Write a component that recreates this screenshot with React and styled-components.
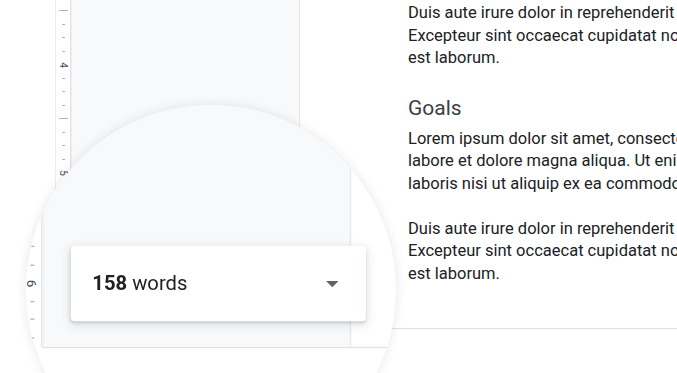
import React from "react";
import styled, { createGlobalStyle } from "styled-components";

const GlobalStyle = createGlobalStyle`
  html, body {
    margin: 0;
    padding: 0;
    width: 677px;
    height: 373px;
    overflow: hidden;
    background: #fff;
    font-family: Roboto, "Liberation Sans", Arial, sans-serif;
  }
`;

const Stage = styled.div`
  position: relative;
  width: 677px;
  height: 373px;
  overflow: hidden;
  background: #fff;
`;

const Doc = styled.div`
  position: relative;
  display: flex;
  width: 677px;
  height: 373px;
  padding-left: 55px;
  box-sizing: border-box;
  align-items: flex-start;
`;

const Ruler = styled.div`
  display: flex;
  flex-direction: column;
  width: 16px;
  height: 328px;
  padding-top: 3.75px;
  box-sizing: border-box;
  background: #fff;
  border-left: 1px solid #ededed;
  border-right: 1px solid #e3e3e3;
  overflow: hidden;
  flex-shrink: 0;
`;

const Mark = styled.div`
  height: 13.5px;
  flex-shrink: 0;
  display: flex;
  align-items: center;
  justify-content: center;
`;

const Tick = styled.span`
  display: block;
  width: ${(p) => (p.$long ? "9px" : "3px")};
  height: 1px;
  background: #b4b4b4;
`;

const RulerNum = styled.span`
  font-size: 10px;
  line-height: 1;
  color: #4a4a4a;
  transform: rotate(90deg);
`;

const Sheet = styled.div`
  flex: 1;
  display: flex;
  height: 329px;
  box-sizing: border-box;
  border-bottom: 1px solid #e2e2e2;
  min-width: 0;
`;

const SidePanel = styled.div`
  width: 227px;
  flex-shrink: 0;
  background: #f8f9fa;
  border-left: 1px solid #eef0f2;
  border-right: 1px solid #e6e8ea;
`;

const Page = styled.div`
  flex: 1;
  min-width: 0;
  overflow: hidden;
  padding: 2px 0 0 108px;
  white-space: nowrap;
  color: #202124;
`;

const Para = styled.p`
  margin: 0 0 22px;
  font-size: 16.5px;
  line-height: 22.6px;
`;

const Heading = styled.h2`
  margin: 24px 0 6px;
  font-size: 21px;
  line-height: 28px;
  font-weight: 400;
  color: #3c4043;
`;

const Counter = styled.div`
  position: absolute;
  left: 92px;
  top: 252.5px;
  width: 219px;
  height: 56px;
  box-sizing: border-box;
  display: flex;
  align-items: center;
  justify-content: space-between;
  padding: 0 14px 0 16px;
  background: #fff;
  border-radius: 3px;
  box-shadow: 0 1px 2px rgba(60, 64, 67, 0.18), 0 2px 6px 1px rgba(60, 64, 67, 0.12);
  font-size: 15px;
  color: #202124;
`;

const Count = styled.span`
  font-weight: 700;
`;

const Caret = styled.svg`
  width: 22px;
  height: 22px;
  fill: #5f6368;
`;

const Lens = styled.div`
  position: absolute;
  left: 26px;
  top: 105px;
  width: 370px;
  height: 370px;
  border-radius: 50%;
  overflow: hidden;
  background: #fff;
  box-shadow: 0 0 10px 2px rgba(0, 0, 0, 0.07);
`;

const Zoomed = styled.div`
  position: absolute;
  left: -26px;
  top: -105px;
  width: 677px;
  height: 373px;
  transform-origin: 153px 274px;
  transform: scale(1.348);
`;

const marks = Array.from({ length: 25 }, (_, n) =>
  n % 8 === 0 ? "long" : n % 8 === 4 ? "label" : "short"
);

const P1 = [
  "Duis aute irure dolor in reprehenderit in voluptate velit esse cillum dolore eu fugiat nulla pariatur.",
  "Excepteur sint occaecat cupidatat non proident, sunt in culpa qui officia deserunt mollit anim id",
  "est laborum.",
];

const P2 = [
  "Lorem ipsum dolor sit amet, consectetur adipiscing elit, sed do eiusmod tempor incididunt ut",
  "labore et dolore magna aliqua. Ut enim ad minim veniam, quis nostrud exercitation ullamco",
  "laboris nisi ut aliquip ex ea commodo consequat.",
];

const Lines = ({ lines }) => (
  <Para>
    {lines.map((l, i) => (
      <React.Fragment key={i}>
        {l}
        {i < lines.length - 1 && <br />}
      </React.Fragment>
    ))}
  </Para>
);

// zoomed copy only needs the left part of the page; the text column is off-lens
const DocView = ({ zoomed }) => (
  <Doc>
    <Ruler>
      {marks.map((kind, n) => (
        <Mark key={n}>
          {kind === "label" ? (
            <RulerNum>{4 + (n - 4) / 8}</RulerNum>
          ) : (
            <Tick $long={kind === "long"} />
          )}
        </Mark>
      ))}
    </Ruler>
    <Sheet>
      <SidePanel />
      <Page>
        {!zoomed && (
          <>
            <Lines lines={P1} />
            <Heading>Goals</Heading>
            <Lines lines={P2} />
            <Lines lines={P1} />
          </>
        )}
      </Page>
    </Sheet>
    {zoomed && (
      <Counter>
        <span>
          <Count>158</Count> words
        </span>
        <Caret viewBox="0 0 24 24">
          <path d="M7 10l5 5 5-5z" />
        </Caret>
      </Counter>
    )}
  </Doc>
);

export default function App() {
  return (
    <Stage>
      <GlobalStyle />
      <DocView />
      <Lens>
        <Zoomed>
          <DocView zoomed />
        </Zoomed>
      </Lens>
    </Stage>
  );
}
